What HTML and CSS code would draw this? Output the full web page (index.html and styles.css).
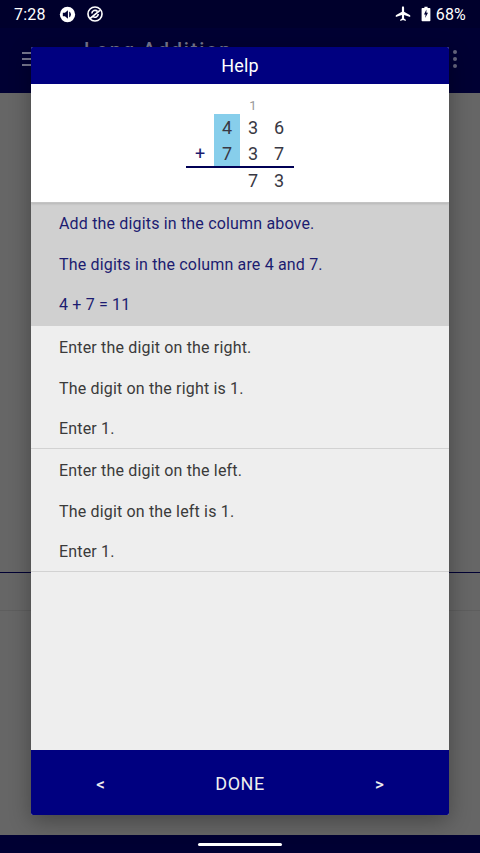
FILE: index.html
```html
<!DOCTYPE html>
<html lang="en">
<head>
<meta charset="utf-8">
<title>Help</title>
<link rel="stylesheet" href="styles.css">
</head>
<body>
<div class="screen">
  <header class="appbar">
    <div class="status">
      <span class="time">7:28</span>
      <svg class="ico" viewBox="0 0 20 20"><circle cx="10" cy="10" r="9" fill="#fff"/><path d="M4.500 8h2.500l3.500-3v10l-3.500-3h-2.500z" fill="#000033"/><path d="M12 6.500a4 4 0 0 1 0 7z" fill="#000033"/></svg>
      <svg class="ico ico-dnd" viewBox="0 0 20 20"><circle cx="10" cy="10" r="7.800" fill="none" stroke="#fff" stroke-width="1.800"/><path d="M6.500 9.500a3.600 3.600 0 0 1 6.300-2.300M13.600 10a3.600 3.600 0 0 1-6 2.700" fill="none" stroke="#fff" stroke-width="1.800"/><path d="M4.500 15l11-9" stroke="#fff" stroke-width="1.800"/></svg>
      <span class="grow"></span>
      <svg class="ico-plane" viewBox="0 0 20 20"><path d="M10 1.500c.8 0 1.200.8 1.200 1.800v4.200l6.800 4v1.700l-6.800-2.100v3.900l1.900 1.400v1.300l-3.100-.9-3.100.9v-1.300l1.900-1.400v-3.900l-6.800 2.100v-1.700l6.800-4v-4.200c0-1 .4-1.800 1.200-1.800z" fill="#fff"/></svg>
      <svg class="ico-batt" viewBox="0 0 12 20"><path d="M4 1h4v1.500h2.500a1 1 0 0 1 1 1v14.500a1 1 0 0 1-1 1h-9a1 1 0 0 1-1-1v-14.500a1 1 0 0 1 1-1h2.500z" fill="#fff"/><path d="M6.500 4.500l-3 6h2l-.5 4.500 3.500-6.500h-2z" fill="#000033"/></svg>
      <span class="pct">68%</span>
    </div>
    <div class="toolbar">
      <div class="burger"><i></i><i></i><i></i></div>
      <span class="app-title">Long Addition</span>
      <div class="kebab"><i></i><i></i><i></i></div>
    </div>
  </header>
  <main class="backdrop">
    <div class="rule-dark"></div>
    <div class="rule-faint"></div>
  </main>
  <footer class="navbar"><span class="pill"></span></footer>

  <section class="dialog">
    <h1 class="dlg-title">Help</h1>
    <div class="sum">
      <div class="grid">
        <span class="c carry col3">1</span>
        <span class="c hl r2 col2">4</span><span class="c r2 col3">3</span><span class="c r2 col4">6</span>
        <span class="c r3 col1 plus">+</span><span class="c hl r3 col2">7</span><span class="c r3 col3">3</span><span class="c r3 col4">7</span>
        <span class="line"></span>
        <span class="c r5 col3">7</span><span class="c r5 col4">3</span>
      </div>
    </div>
    <div class="steps">
      <div class="step active">
        <p>Add the digits in the column above.</p>
        <p>The digits in the column are 4 and 7.</p>
        <p>4 + 7 = 11</p>
      </div>
      <div class="step">
        <p>Enter the digit on the right.</p>
        <p>The digit on the right is 1.</p>
        <p>Enter 1.</p>
      </div>
      <div class="step">
        <p>Enter the digit on the left.</p>
        <p>The digit on the left is 1.</p>
        <p>Enter 1.</p>
      </div>
    </div>
    <div class="actions">
      <span class="arrow">&lt;</span>
      <span class="done">DONE</span>
      <span class="arrow">&gt;</span>
    </div>
  </section>
</div>
</body>
</html>
```
FILE: styles.css
```css
* { box-sizing: border-box; }
html, body { margin: 0; padding: 0; }
body { width: 480px; height: 853px; overflow: hidden; font-family: Roboto, "Noto Sans", sans-serif; background: #666; }
.screen { position: relative; width: 480px; height: 853px; display: flex; flex-direction: column; }

.appbar { height: 93px; flex: none; background-image: linear-gradient(#00002c 0, #00002c 28px, #000033 28px); }
.status { height: 28px; display: flex; align-items: center; padding: 0 14px; color: #fff; }
.time { font-size: 16px; letter-spacing: .2px; margin-right: 13px; }
.ico { width: 17px; height: 17px; margin-right: 10px; }
.ico-dnd { width: 18px; height: 18px; margin-right: 0; }
.grow { flex: 1; }
.ico-plane { width: 18px; height: 18px; margin-right: 9px; }
.ico-batt { width: 10px; height: 16px; margin-right: 5px; }
.pct { font-size: 16px; letter-spacing: .2px; }

.toolbar { height: 65px; display: flex; align-items: center; padding: 0 22px; position: relative; }
.burger { display: flex; flex-direction: column; gap: 4px; width: 16px; margin-top: -4px; }
.burger i { display: block; height: 2px; background: #77778f; }
.app-title { position: absolute; left: 84px; top: 10px; font-size: 20px; font-weight: 500; letter-spacing: 1.8px; color: #77778f; }
.kebab { margin-left: auto; display: flex; flex-direction: column; gap: 3px; margin-right: 1px; margin-top: -4px; }
.kebab i { display: block; width: 4px; height: 4px; border-radius: 50%; background: #66667f; }

.backdrop { flex: 1; background: #666; position: relative; display: flex; flex-direction: column; padding-top: 479px; }
.rule-dark { height: 1px; background: #000033; }
.rule-faint { height: 1px; margin-top: 37px; background: #5e5e5e; }

.navbar { height: 18px; flex: none; background: #000033; display: flex; justify-content: center; align-items: flex-start; padding-top: 8px; }
.pill { width: 84px; height: 3px; border-radius: 2px; background: #fff; }

.dialog { position: absolute; left: 31px; top: 47px; width: 418px; height: 768px; display: flex; flex-direction: column; background: #eeeeee; border-radius: 2px; box-shadow: 0 6px 22px rgba(0,0,0,.32); overflow: hidden; }
.dlg-title { margin: 0; height: 37px; flex: none; background: #000080; color: #fff; font-size: 18px; font-weight: 400; text-align: center; line-height: 38px; letter-spacing: .1px; }

.sum { height: 119px; flex: none; background: #fff; border-bottom: 1px solid #c4c4c4; box-shadow: 0 1px 2px rgba(0,0,0,.12); position: relative; }
.grid { position: absolute; left: 155px; top: 13px; display: grid; grid-template-columns: 28px 26px 26px 28px; grid-template-rows: 17px 26px 26px 2px 25px; width: 108px; }
.c { font-size: 18px; letter-spacing: 0; display: flex; align-items: center; justify-content: center; color: #383844; }
.carry { grid-row: 1; font-size: 13px; color: #999; }
.r2 { grid-row: 2; }
.r3 { grid-row: 3; }
.r5 { grid-row: 5; }
.col1 { grid-column: 1; }
.col2 { grid-column: 2; }
.col3 { grid-column: 3; }
.col4 { grid-column: 4; padding-right: 2px; }
.hl { background: #87ceeb; }
.plus { color: #1c1c70; }
.line { grid-row: 4; grid-column: 1 / 5; background: #000055; }

.steps { flex: 1; min-height: 0; display: flex; flex-direction: column; }
.step { padding: 11px 28px 0; height: 123px; flex: none; border-bottom: 1px solid #d2d2d2; display: flex; flex-direction: column; }
.step p { margin: 0; height: 40.500px; font-size: 16px; line-height: 22px; color: #3a3a3a; flex: none; letter-spacing: .17px; }
.step.active { background: #d0d0d0; border-bottom: 0; padding-top: 10px; }
.step.active p { color: #1c1c70; }

.actions { height: 65px; flex: none; background: #000080; display: grid; grid-template-columns: 1fr 1fr 1fr; align-items: center; justify-items: center; color: #eee; padding: 2px 0 0; }
.done { font-size: 18px; letter-spacing: .5px; }
.arrow { font-size: 17px; font-weight: 500; }
```
